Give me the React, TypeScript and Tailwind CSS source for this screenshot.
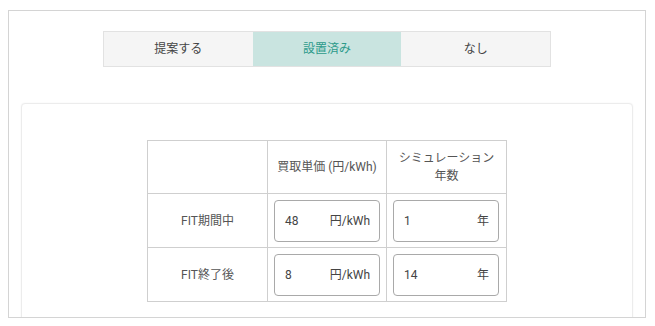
import React, { useState } from "react";

const tabs = ["提案する", "設置済み", "なし"];

const rows = [
  { label: "FIT期間中", price: "48", years: "1" },
  { label: "FIT終了後", price: "8", years: "14" },
];

function UnitInput({ value, unit }: { value: string; unit: string }) {
  return (
    <div className="flex h-[42px] w-[106px] items-center justify-between rounded-[4px] border border-[#a9a9a9] bg-white pl-[10px] pr-[9px] text-[12px] text-[#444]">
      <span>{value}</span>
      <span>{unit}</span>
    </div>
  );
}

export default function App() {
  const [active, setActive] = useState(1);

  return (
    <div
      className="bg-white pl-[8px] pt-[10px]"
      style={{ fontFamily: 'Roboto, "Noto Sans CJK JP", sans-serif' }}
    >
      <div className="h-[308px] w-[638px] overflow-hidden border border-[#d4d4d4] bg-white">
        <div className="flex justify-center pt-[20px]">
          <div className="flex h-[36px] w-[448px] border border-[#e2e2e2]">
            {tabs.map((t, i) => (
              <button
                key={t}
                onClick={() => setActive(i)}
                className={
                  i === active
                    ? "flex flex-1 items-center justify-center bg-[#c9e4e0] text-[12px] text-[#2c9a8a]"
                    : "flex flex-1 items-center justify-center bg-[#f5f5f5] text-[12px] text-[#444]"
                }
              >
                {t}
              </button>
            ))}
          </div>
        </div>

        <div className="mx-[12px] mt-[36px] h-[260px] rounded-[4px] border border-[#ececec] bg-white pt-[36px] shadow-[0_0_2px_rgba(0,0,0,0.06)]">
          <table className="mx-auto w-[360px] border-collapse text-[12px] text-[#555]">
            <thead>
              <tr className="h-[53px]">
                <th className="w-[121px] border border-[#cfcfcf] font-normal"></th>
                <th className="w-[119px] border border-[#cfcfcf] font-normal">
                  買取単価 (円/kWh)
                </th>
                <th className="w-[120px] border border-[#cfcfcf] font-normal leading-[18px]">
                  シミュレーション
                  <br />
                  年数
                </th>
              </tr>
            </thead>
            <tbody>
              {rows.map((r) => (
                <tr key={r.label} className="h-[54px]">
                  <td className="border border-[#cfcfcf] text-center">{r.label}</td>
                  <td className="border border-[#cfcfcf] px-[6px]">
                    <UnitInput value={r.price} unit="円/kWh" />
                  </td>
                  <td className="border border-[#cfcfcf] px-[6px]">
                    <UnitInput value={r.years} unit="年" />
                  </td>
                </tr>
              ))}
            </tbody>
          </table>
        </div>
      </div>
    </div>
  );
}
